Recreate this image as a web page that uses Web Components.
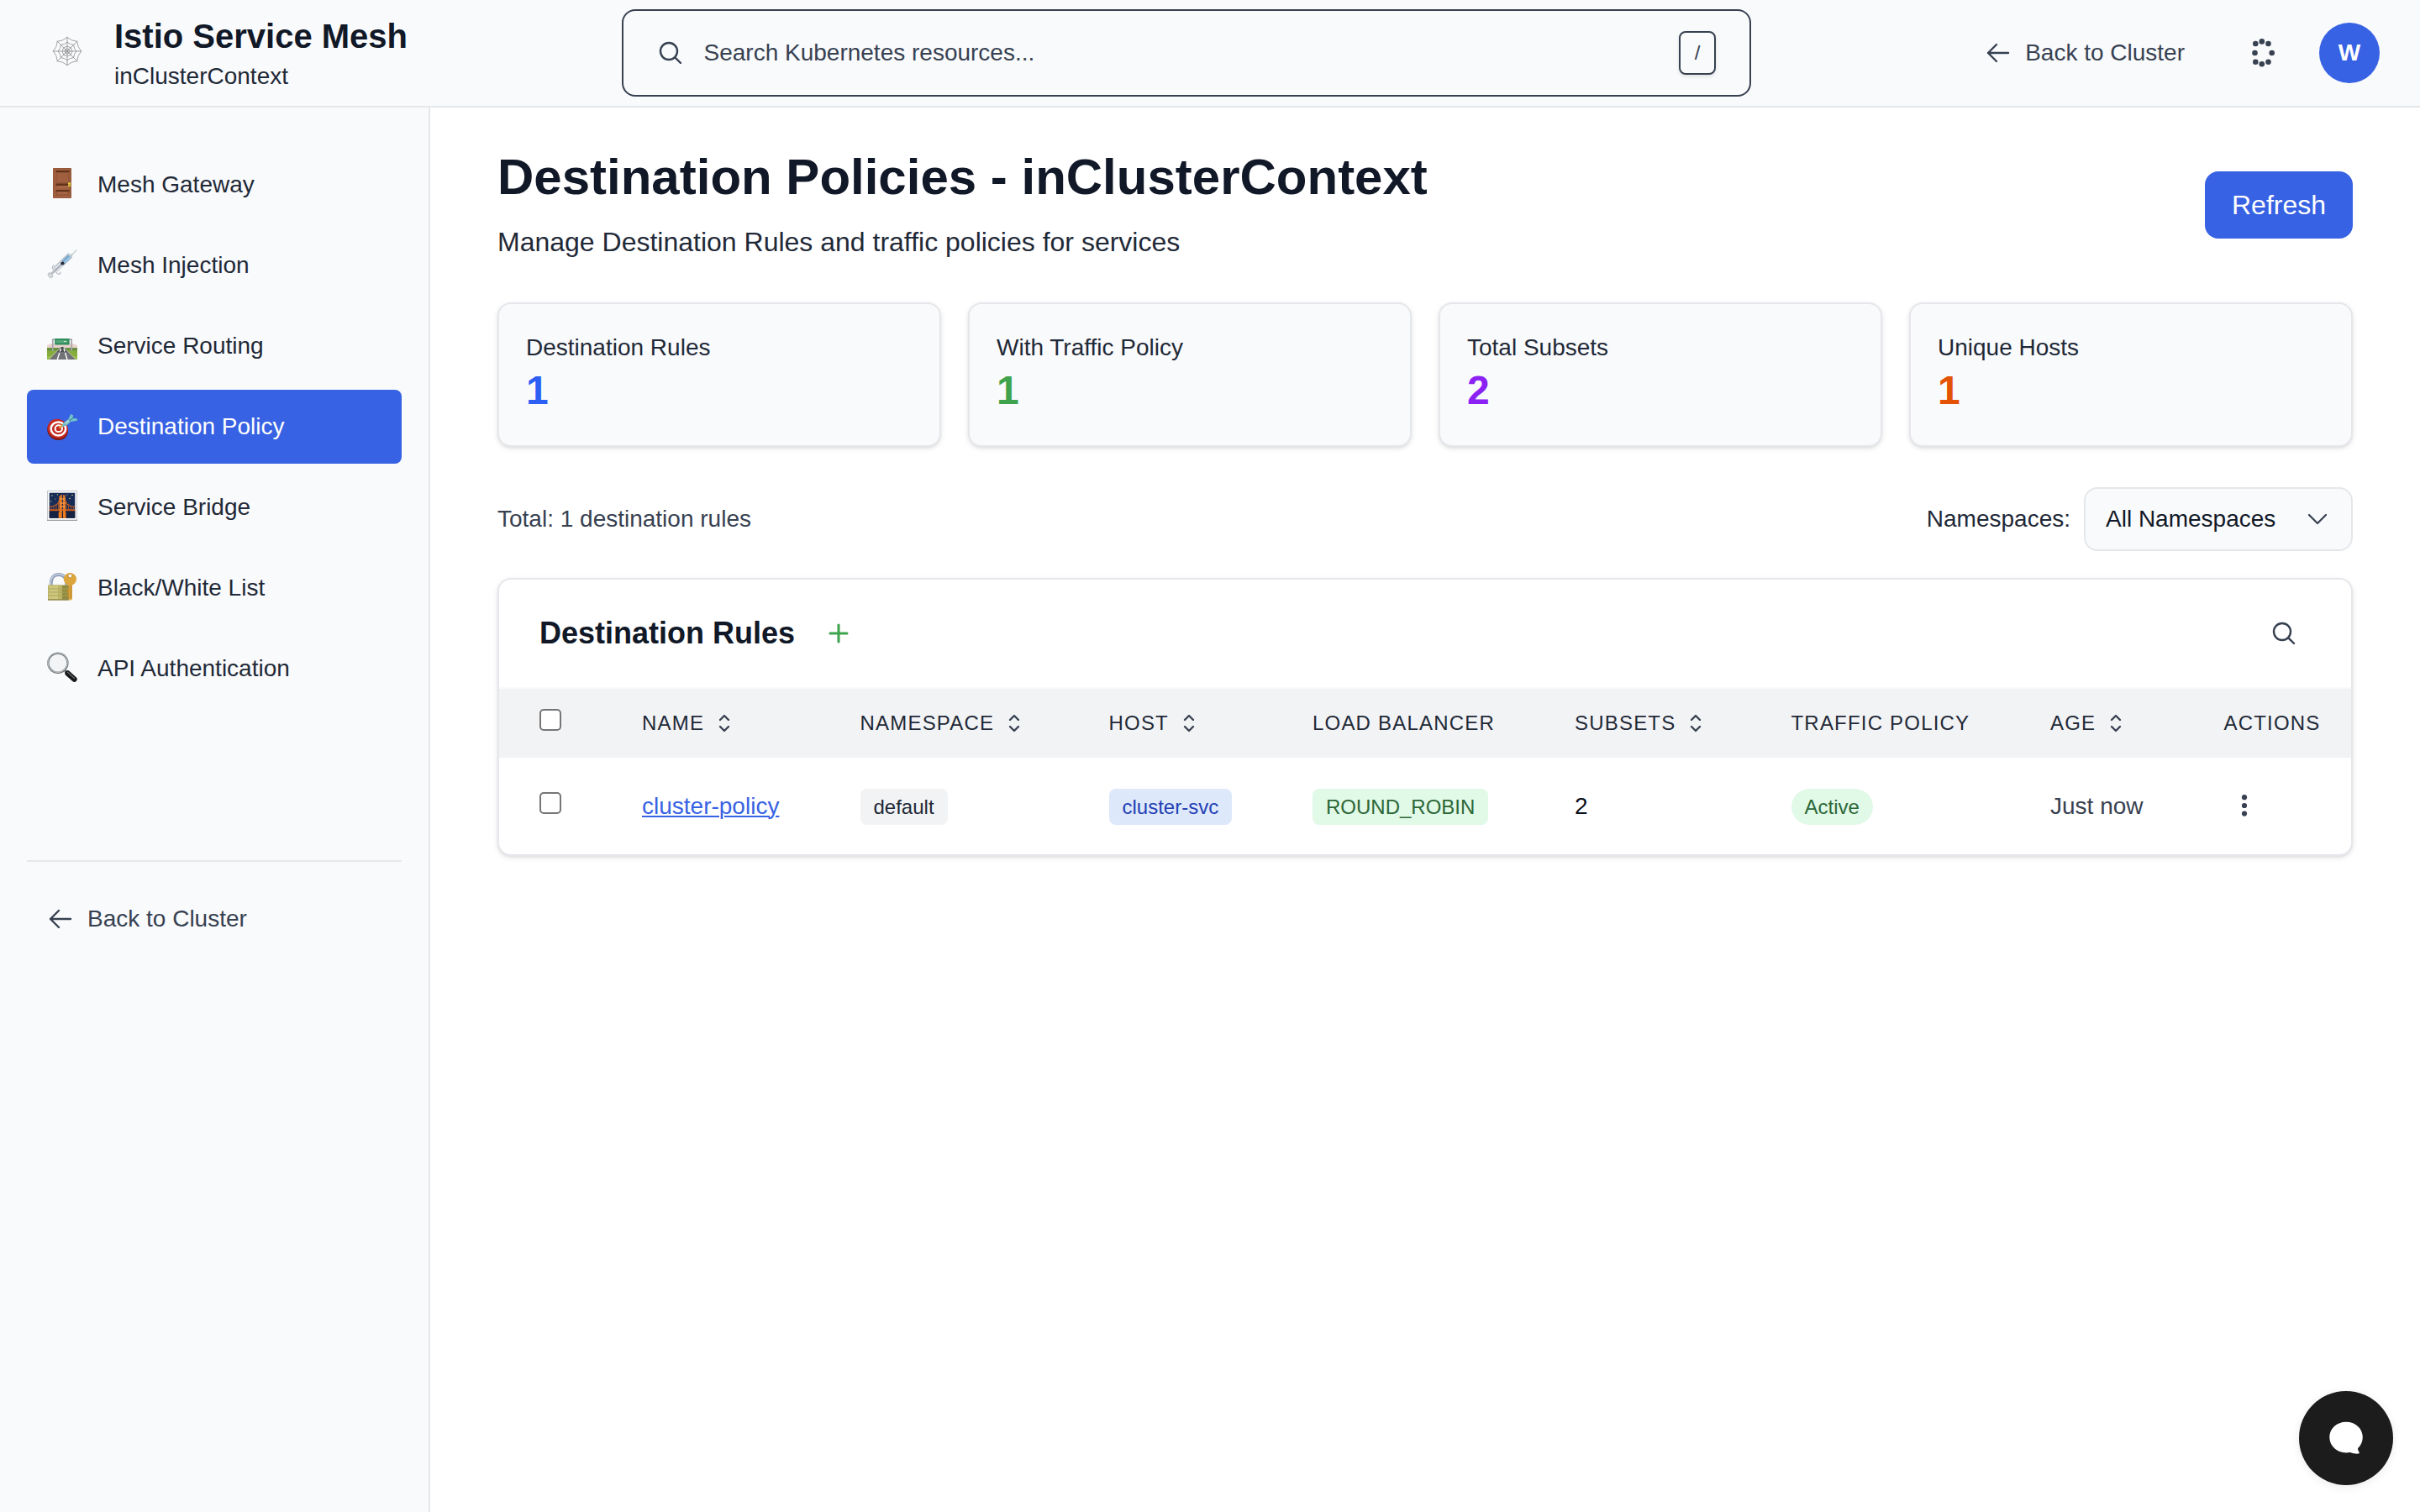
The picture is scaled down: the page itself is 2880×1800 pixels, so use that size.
<!DOCTYPE html>
<html lang="en">
<head>
<meta charset="utf-8">
<title>Istio Service Mesh - Destination Policies</title>
<style>
  html, body { margin: 0; padding: 0; height: 100%; background: #fff; }
  body {
    --blue: #3762e3; --surface: #f9fafc; --line: #e5e7eb;
    --ink: #111827; --text: #1f2937; --muted: #374151;
    font: 28px/40px "Liberation Sans", Arial, sans-serif; color: var(--text); overflow: hidden;
  }
</style>
</head>
<body>
<mesh-app>
  <mesh-header slot="header" heading="Istio Service Mesh" context="inClusterContext" user="W"></mesh-header>
  <mesh-sidebar slot="sidebar">
    <nav-item icon="door">Mesh Gateway</nav-item>
    <nav-item icon="syringe">Mesh Injection</nav-item>
    <nav-item icon="road">Service Routing</nav-item>
    <nav-item icon="target" active>Destination Policy</nav-item>
    <nav-item icon="bridge">Service Bridge</nav-item>
    <nav-item icon="lock">Black/White List</nav-item>
    <nav-item icon="lens">API Authentication</nav-item>
    <span slot="back">Back to Cluster</span>
  </mesh-sidebar>
  <page-heading heading="Destination Policies - inClusterContext">
    Manage Destination Rules and traffic policies for services
    <span slot="action">Refresh</span>
  </page-heading>
  <stat-row>
    <stat-card label="Destination Rules" style="--tone:#2d5ff5">1</stat-card>
    <stat-card label="With Traffic Policy" style="--tone:#3fa34d">1</stat-card>
    <stat-card label="Total Subsets" style="--tone:#8b22f3">2</stat-card>
    <stat-card label="Unique Hosts" style="--tone:#e35205">1</stat-card>
  </stat-row>
  <filter-bar>
    Total: 1 destination rules
    <span slot="label">Namespaces:</span>
    <select-box slot="select">All Namespaces</select-box>
  </filter-bar>
  <rules-card heading="Destination Rules">
    <grid-row head>
      <check-box></check-box>
      <head-cell sortable>NAME</head-cell>
      <head-cell sortable>NAMESPACE</head-cell>
      <head-cell sortable>HOST</head-cell>
      <head-cell>LOAD BALANCER</head-cell>
      <head-cell sortable>SUBSETS</head-cell>
      <head-cell>TRAFFIC POLICY</head-cell>
      <head-cell sortable>AGE</head-cell>
      <head-cell>ACTIONS</head-cell>
    </grid-row>
    <grid-row>
      <check-box></check-box>
      <rule-link>cluster-policy</rule-link>
      <tag-badge>default</tag-badge>
      <tag-badge tone="blue">cluster-svc</tag-badge>
      <tag-badge tone="green">ROUND_ROBIN</tag-badge>
      <span style="color:#0b0f1a">2</span>
      <tag-badge tone="green" pill>Active</tag-badge>
      <span style="color:#374151">Just now</span>
      <mesh-icon name="kebab" size="32" style="margin:0 0 2px 8.5px;color:#374151"></mesh-icon>
    </grid-row>
  </rules-card>
  <chat-button slot="chat"></chat-button>
</mesh-app>

<script>
const stroke = (w, d) => `<path fill="none" stroke="currentColor" stroke-width="${w}" stroke-linecap="round" stroke-linejoin="round" d="${d}"/>`;
const lift = (y, body) => `<g transform="translate(0 ${y})">${body}</g>`;

function webPaths() {
  const p = (r, i) => { const a = i * Math.PI / 4; return [18 + r * Math.cos(a), 18 + r * Math.sin(a)]; };
  let d = '';
  for (let i = 0; i < 8; i++) { const [x, y] = p(17.3, i); d += `M18 18L${x} ${y}`; }
  for (const r of [16.6, 10.8, 6, 3]) {
    for (let i = 0; i < 8; i++) {
      const [x0, y0] = p(r, i), [x1, y1] = p(r, i + 1), [cx, cy] = p(r * (r < 7 ? .92 : .79), i + .5);
      d += `M${x0} ${y0}Q${cx} ${cy} ${x1} ${y1}`;
    }
  }
  return `<path fill="none" stroke="#858585" stroke-width=".75" d="${d}"/>`;
}

const ICONS = {
  search: ['0 0 24 24', stroke(1.8, 'm21 21-5.197-5.197m0 0A7.5 7.5 0 1 0 5.196 5.196a7.5 7.5 0 0 0 10.607 10.607Z')],
  arrow: ['0 0 24 24', stroke(1.8, 'M10.5 19.5 3 12m0 0 7.5-7.5M3 12h18')],
  chevron: ['0 0 24 24', stroke(1.7, 'm19.5 8.25-7.5 7.5-7.5-7.5')],
  sort: ['0 0 24 24', stroke(1.8, 'M8.25 15 12 18.75 15.75 15m-7.5-6L12 5.25 15.75 9')],
  plus: ['0 0 24 24', stroke(2.3, 'M12 4.5v15m7.5-7.5h-15')],
  kebab: ['0 0 32 32', '<g fill="currentColor"><circle cx="16" cy="6.2" r="3.1"/><circle cx="16" cy="16" r="3.1"/><circle cx="16" cy="25.6" r="3.1"/></g>'],
  dots: ['0 0 40 40', '<g fill="currentColor">' + [[11.3,9],[18.8,6.4],[26.5,9],[10.5,20],[30.7,20],[11.3,30.8],[18.8,33.3],[26.5,30.8]].map(([x,y]) => `<circle cx="${x}" cy="${y}" r="3.3"/>`).join('') + '</g>'],
  web: ['0 0 36 36', webPaths()],
  door: ['0 0 36 36', lift(-2, `<rect x="7" y="0" width="22" height="36" rx=".8" fill="#96593a"/><rect x="8.2" y="1.5" width="19" height="33.5" fill="#a16141"/>
    <path d="M10.5 3h16v15h-16z" fill="#8f5434"/><path d="M10.5 3h16v2h-16z" fill="#613219"/><path d="M11.7 6h13.6v11H11.7z" fill="#a06040"/>
    <path d="M10.5 18.5h16v2.7h-16z" fill="#613219"/><path d="M12 21.2h13v2.3H12z" fill="#a96a48"/>
    <path d="M10.5 26h16v2.4h-16z" fill="#613219"/><path d="M10.5 28.4h16v4.6h-16z" fill="#935637"/><path d="M12.5 28.6h12v2.6h-12z" fill="#a86746"/>
    <rect x="25" y="17.2" width="3.2" height="4.8" rx=".6" fill="#e6cf45"/><path d="M25 19.6h3.2v.9H25z" fill="#9b7b1f"/>`)],
  syringe: ['0 0 36 36', lift(-1.5, `<path d="M35 1 28 9" stroke="#aebfc1" stroke-width="1.1"/><path d="m30 6-4 4.5" stroke="#c8d3d6" stroke-width="2.6"/>
    <path d="M27.8 7.2 10 24.2" stroke="#aab2ba" stroke-width="6.8"/><path d="M27.4 8 10.6 24" stroke="#e4e9ee" stroke-width="5.2"/>
    <path d="M27 8.5 19 16.2" stroke="#79a9d0" stroke-width="5.2"/><path d="m27.5 9.5-8 7.6" stroke="#a8cee9" stroke-width="1.6"/>
    <path d="M18.8 16.5 6 29" stroke="#a6a9b8" stroke-width="1.8"/><ellipse cx="18.4" cy="17" rx="2.2" ry="2" fill="#272c3d"/>
    <path d="M8.6 19c-2.6 1-2.8 3.4-1.3 5l4.8 4.9c1.5 1.5 4.1 1 4-1.8" fill="none" stroke="#b7bcc4" stroke-width="1.3"/>
    <path d="m8.5 26.5-4.5 4" stroke="#b9bdc3" stroke-width="2.4"/><ellipse cx="3.9" cy="31.2" rx="2.3" ry="3.3" transform="rotate(-42 3.9 31.2)" fill="#d8dade" stroke="#abafb5" stroke-width=".7"/>`)],
  road: ['0 0 36 36', `<path d="M0 17q8-4 18-1 10-3 18 1v5H0z" fill="#ead2cf"/><path d="M0 20h36v14H0z" fill="#86ad3b"/><path d="M0 20h36v3.6H0z" fill="#699240"/><path d="M0 30h36v4H0z" fill="#94bc44"/>
    <path d="M16.6 19h2.8L34 34H3z" fill="#707276"/><path d="M17 19h2l5 6H12z" fill="#4e5054"/><path d="M1.5 34 16.7 19M34.5 34 19.3 19" stroke="#bdc2b7" stroke-width=".9"/>
    <path d="m16.5 21-1.2 3.5M14.8 26l-2.5 8M20 21l1 3.5M21.6 26l2.4 8" stroke="#fff" stroke-width="1.4"/>
    <path d="M6.8 24V10.2h22.4V24" fill="none" stroke="#a2a6aa" stroke-width="1.7"/><rect x="9.2" y="9" width="17.4" height="7.5" rx=".7" fill="#2e8c5a"/><path d="M11 11h13.5v3.3H11z" fill="#54a77a"/><path d="M20 12.5h3" stroke="#c2e6d0" stroke-width="1"/>`],
  target: ['0 0 36 36', lift(2.4, `<ellipse cx="12.6" cy="19.8" rx="12.6" ry="11.6" fill="#7d1713" transform="rotate(30 12.6 19.8)"/><ellipse cx="12.8" cy="18" rx="12.4" ry="11.4" fill="#c42a22" transform="rotate(30 12.8 18)"/>
    <ellipse cx="13.4" cy="18" rx="8.7" ry="8" fill="none" stroke="#fff" stroke-width="2.5"/><ellipse cx="13.8" cy="17.8" rx="4.2" ry="3.9" fill="#c42a22" stroke="#fff" stroke-width="2"/>
    <path d="M14.5 17.2 20.5 12" stroke="#e1a72d" stroke-width="2"/><path d="m17.5 16.2 1.8-5.1 6-4.6 3 3-4.6 4.3z" fill="#6fb9c4"/><path d="m21.5 12 5-4" stroke="#b9e5e5" stroke-width="1.4"/>
    <path d="M25.3 6.7 28.2 .6l3 1.4-.8 3.7 5.2.1.4 2.5-7.5 1.3z" fill="#73c4ca"/><path d="M26 8.6 31.8 4.8" stroke="#397c91" stroke-width="1"/>`)],
  bridge: ['0 0 36 36', lift(-2, `<rect x=".5" y=".5" width="35" height="35" fill="#fff" stroke="#c4c8ca"/><path d="M0 35.3h36" stroke="#979da0" stroke-width="1.3"/><rect x="2.7" y="2.7" width="30.6" height="30.1" fill="#172c57"/>
    <path d="M2.7 24h30.6v8.8H2.7z" fill="#162241"/><path d="M2.7 19q6 0 6-1 6-1 8-13M33.3 19q-6 0-6-1-6-1-8-13" fill="none" stroke="#d76a25" stroke-width="1.1"/>
    <path d="M2.7 23.2h30.6" stroke="#c45c22" stroke-width="2.1"/><path d="M5 19v4M8 18.5V23M11 15.8V23M13.5 12V23M23 12v11M25.5 15.8V23M28.3 18v5M31.3 19v4" stroke="#ac5426" stroke-width=".9"/>
    <path d="M14.3 6.5h2l.4-1.4h1.1v27.7h-3.2zM19 6.5h1.6V5h1l.7 27.8h-3.3z" fill="#e37927"/><path d="M15 10h7M15 15h7M15 19h7" stroke="#ef9440" stroke-width="1.4"/>
    <path d="M15 26v6.8M21 26v6.8" stroke="#f57a19" stroke-width="2.6"/><g fill="#d4c96b"><circle cx="6" cy="6" r=".8"/><circle cx="12.5" cy="4.8" r=".7"/><circle cx="30" cy="5.5" r=".8"/><circle cx="27" cy="9.5" r=".8"/><circle cx="4.7" cy="12.8" r=".7"/><circle cx="9.7" cy="10" r=".6"/><circle cx="24" cy="5" r=".6"/></g>`)],
  lock: ['0 0 36 36', lift(-1, `<path d="M4.8 18v-5.2C4.8 6.6 8.8 3 13.9 3s9.3 3.6 9.3 9.8V18" fill="none" stroke="#8797b2" stroke-width="3.8"/><path d="M4.3 17v-4.2C4.3 6.3 8.6 2.6 13.9 2.6s8.3 3 9 8" fill="none" stroke="#c4d0e2" stroke-width="1.6"/>
    <rect x="1" y="15.3" width="25" height="18" rx="1" fill="#bdb468"/><path d="M2 16.3h11v16H2z" fill="#cdc67d"/><path d="M18 16h8v16.5h-8z" fill="#918b42"/><path d="M1 20h25M1 24h25M1 28h25" stroke="#aaa35a" stroke-width=".9"/><path d="M1 33h25" stroke="#837a3c" stroke-width="1.2"/>
    <path d="M25.7 13h4.2v19l-2.1 1.9-2.1-1.8z" fill="#d8a139"/><path d="M26 20.5h-2.3v2.8H26zm0 5h-2.3v3H26z" fill="#c28b2a"/><circle cx="27.4" cy="8.5" r="7.6" fill="#dca63d"/><circle cx="27.4" cy="4.5" r="2.3" fill="#f9fafc" stroke="#b07c24" stroke-width=".6"/><path d="M28.6 16v15" stroke="#b9822c" stroke-width=".9"/>`)],
  lens: ['0 0 36 36', lift(-2, `<path d="m20.5 21.5 4 4" stroke="#808487" stroke-width="3"/><path d="m24.5 25.5 8 7.2" stroke="#17191b" stroke-width="6.4" stroke-linecap="round"/><path d="m24.5 24.3 8 7.2" stroke="#62676b" stroke-width="1.4" stroke-linecap="round"/>
    <circle cx="12.9" cy="13.2" r="11.6" fill="#f3f4f5" stroke="#6e7377" stroke-width="2.2"/><circle cx="12.7" cy="12.8" r="11.7" fill="none" stroke="#c6ccd0" stroke-width="1"/>`)],
  bubble: ['0 0 40 40', '<path fill="#fff" d="M20 .8C31 .8 39.8 8.5 39.8 19c0 5-2.2 9.7-5.8 13.3.1 2 .7 3.2 1.6 4.5.5.9.1 1.7-1 1.8-3.3.2-6.6-.3-9.5-1.6-1.6.3-3.3.4-5.1.4C9 37.4.3 29.2.3 19S9 .8 20 .8Z"/>'],
};

class Base extends HTMLElement {
  connectedCallback() {
    if (this.shadowRoot) return;
    const t = document.createElement('template');
    t.innerHTML = `<style>*{box-sizing:border-box}:host{display:block;box-sizing:border-box}${this.css()}</style>${this.html()}`;
    this.attachShadow({ mode: 'open' }).append(t.content.cloneNode(true));
  }
  attr(n) { return this.getAttribute(n) || ''; }
  css() { return ''; }
  html() { return '<slot></slot>'; }
}
const define = (tag, css, html) => customElements.define(tag, class extends Base {
  css() { return css(this); }
  html() { return html ? html(this) : '<slot></slot>'; }
});

define('mesh-icon', e => `:host{display:block;flex:none;width:${e.attr('size')}px;height:${e.attr('size')}px}svg{display:block;width:100%;height:100%;overflow:visible}`,
  e => `<svg viewBox="${ICONS[e.attr('name')][0]}" aria-hidden="true">${ICONS[e.attr('name')][1]}</svg>`);

define('mesh-app', () => `
  :host{display:grid;grid-template:128px 1fr / 512px 1fr;width:100vw;height:100vh}
  ::slotted([slot=header]){grid-column:1 / -1}
  main{padding:48px 80px;display:flex;flex-direction:column;gap:48px;min-width:0}`,
  () => `<slot name="header"></slot><slot name="sidebar"></slot><main><slot></slot></main><slot name="chat"></slot>`);

define('mesh-header', () => `
  :host{display:grid;grid-template-columns:740px 1344px 1fr;align-items:center;height:128px;background:var(--surface);border-bottom:2px solid var(--line)}
  .brand{display:flex;align-items:center;padding:2px 0 0 62px;gap:38px}
  .brand mesh-icon{margin-bottom:6px}
  .brand b{display:block;font-size:40px;line-height:50px;color:var(--ink)}
  .brand div div{margin-top:3px}
  .search{display:flex;align-items:center;height:104px;border:2px solid var(--muted);border-radius:16px;padding:0 40px;gap:24px;color:var(--muted)}
  .search span{flex:1;margin-left:-.5px}
  kbd{width:44px;height:52px;border:2px solid var(--muted);border-radius:8px;font:24px/47px "Liberation Sans",Arial,sans-serif;text-align:center;box-shadow:0 2px 4px rgba(0,0,0,.1)}
  .right{display:flex;align-items:center;justify-content:flex-end;padding-right:48px;color:var(--muted)}
  .back{display:flex;align-items:center;gap:16px;margin-right:73px}
  .avatar{width:72px;height:72px;margin-left:47px;border-radius:50%;background:var(--blue);color:#fff;font-weight:700;line-height:71px;text-align:center}`,
  e => `<div class="brand"><mesh-icon name="web" size="36"></mesh-icon><div><b>${e.attr('heading')}</b><div>${e.attr('context')}</div></div></div>
  <div class="search"><mesh-icon name="search" size="32"></mesh-icon><span>Search Kubernetes resources...</span><kbd>/</kbd></div>
  <div class="right"><div class="back"><mesh-icon name="arrow" size="32"></mesh-icon><span>Back to Cluster</span></div><mesh-icon name="dots" size="40"></mesh-icon><div class="avatar">${e.attr('user')}</div></div>`);

define('mesh-sidebar', () => `
  :host{background:var(--surface);border-right:2px solid var(--line);padding:48px 32px}
  nav{display:flex;flex-direction:column;gap:8px}
  .foot{margin-top:184px;border-top:2px solid var(--line);padding:48px 24px;display:flex;align-items:center;gap:16px;color:var(--muted)}`,
  () => `<nav><slot></slot></nav><div class="foot"><mesh-icon name="arrow" size="32"></mesh-icon><slot name="back"></slot></div>`);

define('nav-item', () => `
  :host{display:flex;align-items:center;gap:24px;height:88px;padding:0 24px 1px;border-radius:8px}
  :host([active]){background:var(--blue);color:#fff}`,
  e => `<mesh-icon name="${e.attr('icon')}" size="36"></mesh-icon><span><slot></slot></span>`);

define('page-heading', () => `
  :host{display:flex;align-items:center;justify-content:space-between;height:136px}
  h1{margin:-1px 0 17px;font-size:60px;line-height:72px;color:var(--ink)}
  p{margin:0;font-size:32px;line-height:48px}
  button{width:176px;height:80px;padding:0;border:0;border-radius:16px;background:var(--blue);color:#fff;font:32px/80px "Liberation Sans",Arial,sans-serif}`,
  e => `<div><h1>${e.attr('heading')}</h1><p><slot></slot></p></div><button><slot name="action"></slot></button>`);

define('stat-row', () => `:host{display:grid;grid-template-columns:repeat(4,1fr);gap:32px}`);
define('stat-card', () => `
  :host{height:172px;padding:32px;background:var(--surface);border:2px solid var(--line);border-radius:16px;box-shadow:0 2px 6px rgba(0,0,0,.1),0 2px 4px -2px rgba(0,0,0,.1)}
  .n{margin-top:-1px;font-size:48px;line-height:64px;font-weight:700;color:var(--tone)}`,
  e => `<div>${e.attr('label')}</div><div class="n"><slot></slot></div>`);

define('filter-bar', () => `
  :host{display:flex;align-items:center;height:76px;color:var(--muted)}
  .t{flex:1}.l{margin-right:16px;color:var(--text)}`,
  () => `<div class="t"><slot></slot></div><div class="l"><slot name="label"></slot></div><slot name="select"></slot>`);
define('select-box', () => `
  :host{display:flex;align-items:center;justify-content:space-between;width:320px;height:76px;padding:0 24px;background:var(--surface);border:2px solid var(--line);border-radius:16px;color:var(--ink)}
  mesh-icon{color:var(--muted)}`,
  () => `<span><slot></slot></span><mesh-icon name="chevron" size="32"></mesh-icon>`);

define('rules-card', () => `
  :host{margin-top:-16px;border:2px solid var(--line);border-radius:16px;overflow:hidden;background:#fff;box-shadow:0 2px 6px rgba(0,0,0,.1),0 2px 4px -2px rgba(0,0,0,.1)}
  .bar{display:flex;align-items:center;height:130px;padding:0 64px 0 48px;border-bottom:2px solid #f9fafb}
  h2{margin:0;font-size:36px;line-height:48px;color:var(--ink)}
  .add{margin-left:36px;color:#3fa34d}.find{margin-left:auto;color:var(--muted)}`,
  e => `<div class="bar"><h2>${e.attr('heading')}</h2><mesh-icon class="add" name="plus" size="32"></mesh-icon><mesh-icon class="find" name="search" size="32"></mesh-icon></div><slot></slot>`);

define('grid-row', () => `
  :host{display:grid;grid-template-columns:122px 259.5px 296px 242.5px 312px 257.5px 308.5px 206.5px 1fr;align-items:center;height:115px;padding-left:48px}
  :host([head]){height:82px;background:#f2f3f5}`);
define('head-cell', () => `
  :host{display:flex;align-items:center;gap:8px;font-size:24px;letter-spacing:1.2px;white-space:nowrap}
  mesh-icon{color:var(--muted)}`,
  e => `<span><slot></slot></span>${e.hasAttribute('sortable') ? '<mesh-icon name="sort" size="32"></mesh-icon>' : ''}`);
define('check-box', () => `:host{width:26px;height:26px;margin-bottom:8px;border:2px solid #767676;border-radius:5px;background:#fff}`);
define('rule-link', () => `a{color:var(--blue);text-decoration:underline;text-decoration-thickness:2px;text-underline-offset:2px}`, () => `<a><slot></slot></a>`);
define('tag-badge', () => `
  :host{justify-self:start;height:43px;padding:8px 16px;margin-top:2px;border-radius:8px;font-size:24px;line-height:27px;background:#f2f3f5;color:var(--text)}
  :host([tone=blue]){background:#dde8fb;color:#2340b4}
  :host([tone=green]){background:#e1f9e7;color:#2c6737}
  :host([pill]){border-radius:22px}`);

define('chat-button', () => `
  :host{position:fixed;right:32px;bottom:32px;width:112px;height:112px;border-radius:50%;background:#1c1c1c;display:flex;align-items:center;justify-content:center;box-shadow:0 2px 12px rgba(0,0,0,.08)}`,
  () => `<mesh-icon name="bubble" size="40"></mesh-icon>`);
</script>
</body>
</html>
